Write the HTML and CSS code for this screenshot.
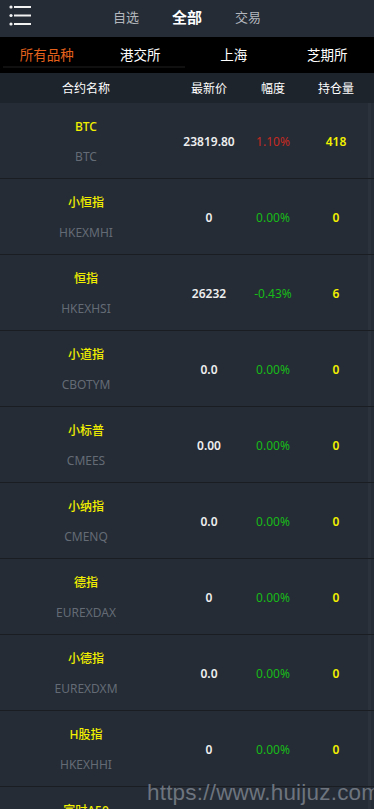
FILE: index.html
```html
<!DOCTYPE html>
<html lang="zh">
<head>
<meta charset="utf-8">
<title>行情</title>
<link rel="stylesheet" href="styles.css">
</head>
<body>
<div class="page">
  <header class="topbar">
    <div class="menu-icon">
      <svg width="24" height="22" viewBox="0 0 24 22">
        <circle cx="3" cy="2" r="1.6" fill="#f2f2f2"/>
        <circle cx="3" cy="10.5" r="1.6" fill="#f2f2f2"/>
        <circle cx="3" cy="19" r="1.6" fill="#f2f2f2"/>
        <rect x="6" y="1" width="17" height="2" fill="#f2f2f2"/>
        <rect x="6" y="9.5" width="17" height="2" fill="#f2f2f2"/>
        <rect x="6" y="18" width="17" height="2" fill="#f2f2f2"/>
      </svg>
    </div>
    <nav class="main-tabs">
      <span class="main-tab">自选</span>
      <span class="main-tab active">全部</span>
      <span class="main-tab">交易</span>
    </nav>
  </header>
  <div class="subtabs">
    <span class="subtab active">所有品种</span>
    <span class="subtab">港交所</span>
    <span class="subtab">上海</span>
    <span class="subtab">芝期所</span>
    <span class="indicator"></span>
  </div>
  <div class="thead">
    <span>合约名称</span>
    <span>最新价</span>
    <span>幅度</span>
    <span>持仓量</span>
  </div>
  <div class="list">
    <div class="row"><div class="name"><span class="cn">BTC</span><span class="code">BTC</span></div><span class="price">23819.80</span><span class="pct up">1.10%</span><span class="vol">418</span></div>
    <div class="row"><div class="name"><span class="cn">小恒指</span><span class="code">HKEXMHI</span></div><span class="price">0</span><span class="pct down">0.00%</span><span class="vol">0</span></div>
    <div class="row"><div class="name"><span class="cn">恒指</span><span class="code">HKEXHSI</span></div><span class="price">26232</span><span class="pct down">-0.43%</span><span class="vol">6</span></div>
    <div class="row"><div class="name"><span class="cn">小道指</span><span class="code">CBOTYM</span></div><span class="price">0.0</span><span class="pct down">0.00%</span><span class="vol">0</span></div>
    <div class="row"><div class="name"><span class="cn">小标普</span><span class="code">CMEES</span></div><span class="price">0.00</span><span class="pct down">0.00%</span><span class="vol">0</span></div>
    <div class="row"><div class="name"><span class="cn">小纳指</span><span class="code">CMENQ</span></div><span class="price">0.0</span><span class="pct down">0.00%</span><span class="vol">0</span></div>
    <div class="row"><div class="name"><span class="cn">德指</span><span class="code">EUREXDAX</span></div><span class="price">0</span><span class="pct down">0.00%</span><span class="vol">0</span></div>
    <div class="row"><div class="name"><span class="cn">小德指</span><span class="code">EUREXDXM</span></div><span class="price">0.0</span><span class="pct down">0.00%</span><span class="vol">0</span></div>
    <div class="row"><div class="name"><span class="cn">H股指</span><span class="code">HKEXHHI</span></div><span class="price">0</span><span class="pct down">0.00%</span><span class="vol">0</span></div>
    <div class="row"><div class="name"><span class="cn">富时A50</span><span class="code">SGXCN</span></div><span class="price">0</span><span class="pct down">0.00%</span><span class="vol">0</span></div>
  </div>
  <div class="watermark">https://www.huijuz.com</div>
</div>
</body>
</html>
```

FILE: styles.css
```css
html, body {
  margin: 0;
  padding: 0;
  overflow: hidden;
  background: #252c36;
}
body {
  font-family: "Noto Sans", "Noto Sans CJK SC", sans-serif;
  color: #eeeeee;
}
.page {
  position: relative;
  width: 374px;
  height: 809px;
  overflow: hidden;
}
.topbar {
  position: relative;
  height: 37px;
  background: #252c36;
  display: flex;
  align-items: center;
  justify-content: center;
}
.menu-icon {
  position: absolute;
  left: 8px;
  top: 5px;
  width: 24px;
  height: 22px;
}
.menu-icon svg { display: block; }
.main-tabs {
  display: flex;
  align-items: center;
  margin-top: -4px;
}
.main-tab {
  width: 61px;
  text-align: center;
  font-size: 13px;
  color: #b4b8be;
  line-height: 18px;
}
.main-tab.active {
  font-size: 15px;
  font-weight: 700;
  color: #ffffff;
}
.subtabs {
  position: relative;
  height: 36px;
  background: #000000;
  display: grid;
  grid-template-columns: repeat(4, 1fr);
  align-items: center;
}
.subtab {
  text-align: center;
  font-size: 13.5px;
  color: #ffffff;
  line-height: 18px;
}
.subtab.active {
  color: #e4621c;
}
.indicator {
  position: absolute;
  left: 3px;
  top: 29px;
  width: 182px;
  height: 2px;
  background: #101010;
}
.thead {
  height: 30px;
  background: #1e242b;
  display: grid;
  grid-template-columns: 172px 74px 54px 72px;
  align-items: center;
  font-size: 12px;
  color: #ffffff;
}
.thead span {
  text-align: center;
  margin-bottom: 1px;
}
.list {
  background: linear-gradient(to right, #252c36 0, #252c36 368px, #2b323c 368px, #2b323c 371px, #252c36 371px);
}
.row {
  height: 75px;
  border-bottom: 1px solid #1a1d22;
  display: grid;
  grid-template-columns: 172px 74px 54px 72px;
  align-items: center;
  font-size: 12px;
}
.name {
  display: flex;
  flex-direction: column;
  align-items: center;
  gap: 14px;
  padding-top: 2px;
}
.cn {
  color: #f2f000;
  line-height: 16px;
  font-weight: 500;
}
.code {
  color: #646b75;
  line-height: 16px;
}
.price {
  text-align: center;
  color: #eeeeee;
  font-weight: 600;
  padding-top: 2px;
}
.pct {
  text-align: center;
  padding-top: 2px;
}
.pct.up { color: #c62a22; }
.pct.down { color: #18bb18; }
.vol {
  text-align: center;
  color: #f2f000;
  font-weight: 600;
  padding-top: 2px;
}
.watermark {
  position: absolute;
  left: 147px;
  top: 780px;
  font-family: "Liberation Sans", Arial, sans-serif;
  font-size: 22.5px;
  color: #6d747e;
  letter-spacing: 0.2px;
  white-space: nowrap;
}
```
